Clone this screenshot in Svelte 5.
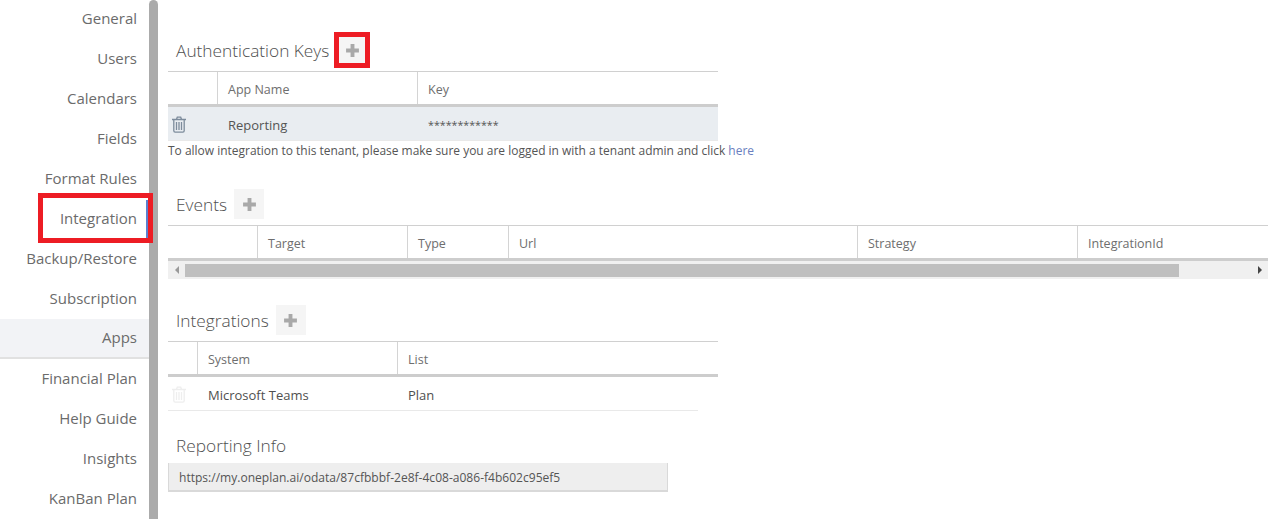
<script>
  const nav = ['General','Users','Calendars','Fields','Format Rules','Integration','Backup/Restore','Subscription','Apps','Financial Plan','Help Guide','Insights','KanBan Plan'];
</script>

{#snippet plus()}
  <svg width="15" height="15" viewBox="0 0 14 14"><path d="M5.2 1h3.6v4.2H13v3.6H8.800V13H5.200V8.800H1V5.200h4.200z" fill="#a9a9a9"/></svg>
{/snippet}
{#snippet trash(c)}
  <svg width="16" height="17" viewBox="0 0 16 17" fill="none" stroke={c} stroke-width="1.300"><path d="M1 3.500h14M5.500 3.300 6.300 1.200h3.400l.8 2.100M2.800 3.500v11.300a1.300 1.300 0 0 0 1.300 1.300h7.800a1.300 1.300 0 0 0 1.300-1.300V3.500M5.500 6v8M8 6v8M10.500 6v8"/></svg>
{/snippet}

<div class="page">
  <nav class="side">
    <ul class="items">
      {#each nav as item}
        <li class="item" class:active={item === 'Apps'} class:current={item === 'Integration'}>{item}</li>
      {/each}
    </ul>
    <div class="thumb"></div>
    <div class="mark navmark"></div>
  </nav>

  <main class="main">
    <section class="auth">
      <header class="head"><h2>Authentication Keys</h2>
        <button class="add marked">{@render plus()}</button></header>
      <div class="table w550">
        <div class="thead"><div class="c c50"></div><div class="c c200">App Name</div><div class="c grow">Key</div></div>
        <div class="row sel"><div class="ic">{@render trash('#7d8c9c')}</div><div class="t c200">Reporting</div><div class="t stars">************</div></div>
      </div>
      <p class="note">To allow integration to this tenant, please make sure you are logged in with a tenant admin and click <a href="#here">here</a></p>
    </section>

    <section class="events">
      <header class="head"><h2>Events</h2><button class="add">{@render plus()}</button></header>
      <div class="table">
        <div class="thead"><div class="c c90"></div><div class="c c150">Target</div><div class="c c100">Type</div><div class="c c350">Url</div><div class="c c220">Strategy</div><div class="c grow">IntegrationId</div></div>
        <div class="scroll">
          <span class="arrow left"></span>
          <div class="track"><div class="bar"></div></div>
          <span class="arrow right"></span>
        </div>
      </div>
    </section>

    <section class="integrations">
      <header class="head"><h2>Integrations</h2><button class="add">{@render plus()}</button></header>
      <div class="table w550">
        <div class="thead"><div class="c c30"></div><div class="c c200">System</div><div class="c grow">List</div></div>
        <div class="row plain"><div class="ic small">{@render trash('#eeeeee')}</div><div class="t c200 dark">Microsoft Teams</div><div class="t dark">Plan</div></div>
      </div>
    </section>

    <section class="info">
      <h2>Reporting Info</h2>
      <div class="url">https://my.oneplan.ai/odata/87cfbbbf-2e8f-4c08-a086-f4b602c95ef5</div>
    </section>
  </main>
</div>

<style>
  :global(body) { margin: 0; background: #fff; }
  .page { width: 1284px; height: 519px; display: flex; overflow: hidden; font-family: "Open Sans", "Noto Sans", sans-serif; color: #666; }
  .side { position: relative; width: 158px; flex: none; }
  .items { list-style: none; margin: 0; padding: 0; width: 149px; }
  .item { height: 40px; box-sizing: border-box; padding-right: 12px; text-align: right; font-size: 15px; line-height: 36px; color: #6b6b6b; }
  .item.active { background: #f2f3f6; border-bottom: 2px solid #e1e1e1; line-height: 37px; margin-top: -1px; margin-bottom: 1px; }
  .item.current { border-right: 3px solid #5b7fcf; padding-right: 9px; }
  .thumb { position: absolute; left: 149px; top: 0; bottom: 0; width: 9px; background: #ababab; border-radius: 5px 5px 0 0; }
  .mark { position: absolute; border: 5px solid #ed1c24; box-sizing: border-box; }
  .navmark { left: 38px; top: 193px; width: 115px; height: 50px; }

  .main { flex: 1; padding-left: 10px; padding-right: 16px; min-width: 0; }
  h2 { margin: 0; font-size: 17.300px; font-weight: 300; color: #4f4f4f; line-height: 24px; padding: 2px 0 0 8px; }
  .head { display: flex; align-items: center; gap: 7px; height: 30px; }
  .add { width: 30px; height: 30px; border: 0; padding: 0; background: #f5f5f5; display: flex; align-items: center; justify-content: center; }
  .add.marked { outline: 5px solid #ed1c24; outline-offset: -2px; margin-left: 1px; }
  .auth { padding-top: 35px; }
  .table { margin-top: 6px; }
  .w550 { width: 550px; }
  .thead { display: flex; height: 36px; box-sizing: border-box; border-top: 1px solid #d0d0d0; border-bottom: 3px solid #cdcdcd; }
  .c { box-sizing: border-box; border-right: 1px solid #d4d4d4; padding-left: 10px; font-size: 12.500px; line-height: 35px; color: #6e6e6e; flex: none; }
  .c.grow { flex: 1; border-right: 0; }
  .c30 { width: 30px; padding: 0; } .c50 { width: 50px; padding: 0; } .c90 { width: 90px; padding: 0; }
  .c100 { width: 101px; } .c150 { width: 150px; } .c200 { width: 200px; } .c220 { width: 220px; } .c350 { width: 349px; }
  .row { display: flex; align-items: center; height: 34px; box-sizing: border-box; border-bottom: 1px solid #e9e9e9; font-size: 13px; color: #555; }
  .sel { background: #e9edf1; }
  .plain { width: 530px; }
  .ic { width: 50px; flex: none; padding: 2px 0 0 3px; box-sizing: border-box; display: flex; align-items: center; }
  .ic.small { width: 30px; }
  .t { padding: 4px 0 0 10px; box-sizing: border-box; line-height: 33px; flex: none; }
  .stars { font-size: 10.700px; }
  .dark { color: #4f4f4f; }
  .note { margin: 0; font-size: 11.980px; line-height: 20px; color: #555; }
  .note a { color: #6a7fc0; text-decoration: none; }
  .events { padding-top: 28px; }
  .scroll { display: flex; align-items: center; height: 18px; background: #f0f0f0; }
  .track { flex: 1; height: 13px; margin-top: 1px; }
  .bar { width: 994px; height: 13px; background: #bfbfbf; }
  .arrow { width: 17px; flex: none; display: flex; justify-content: center; }
  .arrow::before { content: ""; border: 4px solid transparent; }
  .left::before { border-right-color: #9a9a9a; border-left-width: 0; }
  .right::before { border-left-color: #444; border-right-width: 0; }
  .integrations { padding-top: 26px; }
  .info { padding-top: 21px; }
  .url { width: 500px; height: 29px; box-sizing: border-box; margin-top: 5px; background: #eee; border: 1px solid #d9d9d9; border-width: 0 1px 2px 1px; padding-left: 10px; font-size: 12.050px; line-height: 30px; color: #555; }
</style>
